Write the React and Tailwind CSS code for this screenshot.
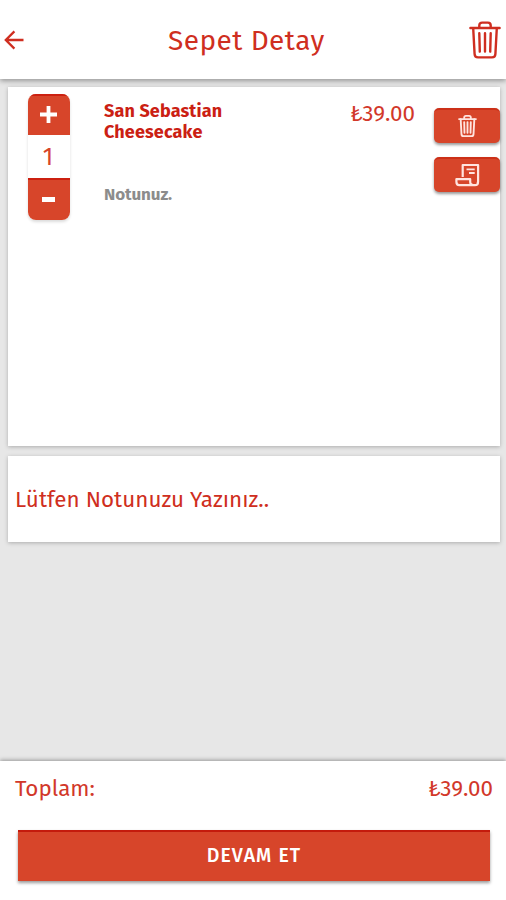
import { useState } from 'react';

const items = [{ id: 1, title: 'San Sebastian Cheesecake', price: 39, note: 'Notunuz.' }];

const formatPrice = (value) => `₺${value.toFixed(2)}`;

const BackIcon = () => (
  <svg width="20" height="20" viewBox="0 0 20 20" fill="none" stroke="currentColor" strokeWidth="2.3">
    <path d="M19.5 10H2M10.4 1.4L1.8 10l8.6 8.6" />
  </svg>
);

const TrashIcon = ({ className, strokeWidth }) => (
  <svg className={className} viewBox="0 0 32 38" fill="none" stroke="currentColor" strokeWidth={strokeWidth} strokeLinecap="round" strokeLinejoin="round">
    <path d="M1.4 7h29.2" />
    <path d="M10.3 6.8V4.4c0-1.8 1-2.8 2.8-2.8h5.8c1.8 0 2.8 1 2.8 2.8v2.4" />
    <path d="M4.2 7.2l1.4 25.8c.1 2.1 1.3 3.4 3.4 3.4h14c2.1 0 3.3-1.3 3.4-3.4l1.4-25.8" />
    <path d="M10.3 12.2l.5 18.4M16 12.2v18.4M21.7 12.2l-.5 18.4" />
  </svg>
);

const NoteIcon = () => (
  <svg width="25" height="24" viewBox="0 0 25 24" fill="none" stroke="currentColor" strokeWidth="2.2" strokeLinejoin="round">
    <path d="M7.7 14V2h15.4v16.4c0 2.4-1.2 3.8-3.2 3.8H4.4c-1.9 0-3-1.3-3-3.4v-2.6h13.8v2.8c0 2 1.6 3.2 4.4 3.2" />
    <path d="M11.5 6.3h8.2M14 10h5.7" strokeWidth="1.8" />
  </svg>
);

const ActionButton = ({ children }) => (
  <button className="flex h-[35px] w-[66px] items-center justify-center rounded-[5px] border-t-2 border-[#cc3018] bg-[#d7452a] pb-0.5 text-[#ffe4df] shadow-[0_2px_3px_rgba(0,0,0,0.4)]">
    {children}
  </button>
);

const CartItem = ({ item, count, onChange }) => (
  <div className="flex items-start pl-5 pt-[7px]">
    <div className="flex w-[42px] shrink-0 flex-col overflow-hidden rounded-[8px] bg-white shadow-[0_2px_3px_rgba(0,0,0,0.14)]">
      <button className="flex h-[41px] items-center justify-center border-t-2 border-[#cc2010] bg-[#d7452a] pb-0.5 pr-0.5 text-white" onClick={() => onChange(count + 1)}>
        <svg width="17" height="17" viewBox="0 0 17 17" fill="none" stroke="currentColor" strokeWidth="3.8">
          <path d="M0 8.5h17M8.5 0v17" />
        </svg>
      </button>
      <span className="flex h-[43px] items-center justify-center pr-0.5 text-[24px] text-[#d7452a]">{count}</span>
      <button className="flex h-[42px] items-center justify-center border-t-2 border-[#cc2010] bg-[#d7452a] pb-0.5 pr-px text-white" onClick={() => onChange(Math.max(1, count - 1))}>
        <svg width="13" height="5" viewBox="0 0 13 5" fill="currentColor">
          <path d="M0 0h13v5H0z" />
        </svg>
      </button>
    </div>
    <div className="ml-[34px] mt-[7px] flex w-[150px] flex-col text-[18px] font-bold leading-[21px]">
      <h2 className="tracking-[0.15px] text-[#cb2013]">{item.title}</h2>
      <p className="mt-[41px] text-[17px] tracking-[-0.1px] text-[#8c8c8c]">{item.note}</p>
    </div>
    <span className="mt-[5px] w-[161px] text-right text-[22.4px] leading-[30px] text-[#d2382a]">{formatPrice(item.price)}</span>
    <div className="ml-auto mt-[14px] flex flex-col gap-[14px]">
      <ActionButton>
        <TrashIcon className="h-[22px] w-[19px]" strokeWidth="3.2" />
      </ActionButton>
      <ActionButton>
        <NoteIcon />
      </ActionButton>
    </div>
  </div>
);

const App = () => {
  const [count, setCount] = useState(1);
  const total = items.reduce((sum, item) => sum + item.price * count, 0);

  return (
    <div className="flex h-[900px] w-[506px] flex-col overflow-hidden bg-[#e7e7e7] font-['Fira_Sans','Noto_Sans',sans-serif] text-[#cf2e20]">
      <header className="flex h-[79px] shrink-0 items-center bg-white pl-1 pr-[5px] shadow-[0_2px_5px_rgba(0,0,0,0.35)]">
        <button className="w-[164px]">
          <BackIcon />
        </button>
        <h1 className="whitespace-nowrap pt-0.5 text-[28px] leading-[36px] tracking-[0.45px]">Sepet Detay</h1>
        <button className="ml-auto pt-px">
          <TrashIcon className="h-[38px] w-[32px]" strokeWidth="2.4" />
        </button>
      </header>

      <main className="flex grow flex-col gap-[10px] pl-2 pr-[6px] pt-2">
        <section className="h-[359px] bg-white shadow-[0_1px_4px_rgba(0,0,0,0.25)]">
          {items.map((item) => (
            <CartItem key={item.id} item={item} count={count} onChange={setCount} />
          ))}
        </section>
        <section className="flex h-[86px] items-center bg-white pl-[7px] shadow-[0_1px_4px_rgba(0,0,0,0.25)]">
          <p className="whitespace-nowrap pt-0.5 text-[22.4px] tracking-[0.03px]">Lütfen Notunuzu Yazınız..</p>
        </section>
      </main>

      <footer className="h-[139px] shrink-0 bg-white shadow-[0_-1px_4px_rgba(0,0,0,0.35)]">
        <div className="flex h-[69px] justify-between pl-[15px] pr-[13px] pt-[13px] text-[22.4px] leading-[30px] text-[#d2382a]">
          <span>Toplam:</span>
          <span>{formatPrice(total)}</span>
        </div>
        <button className="ml-[18px] flex h-[51px] w-[472px] items-center justify-center border-t-2 border-[#c41a0c] bg-[#d7452a] pb-0.5 text-[19.5px] font-medium tracking-[1.1px] text-white shadow-[0_2px_3px_rgba(0,0,0,0.4)]">
          DEVAM ET
        </button>
      </footer>
    </div>
  );
};

export default App;
